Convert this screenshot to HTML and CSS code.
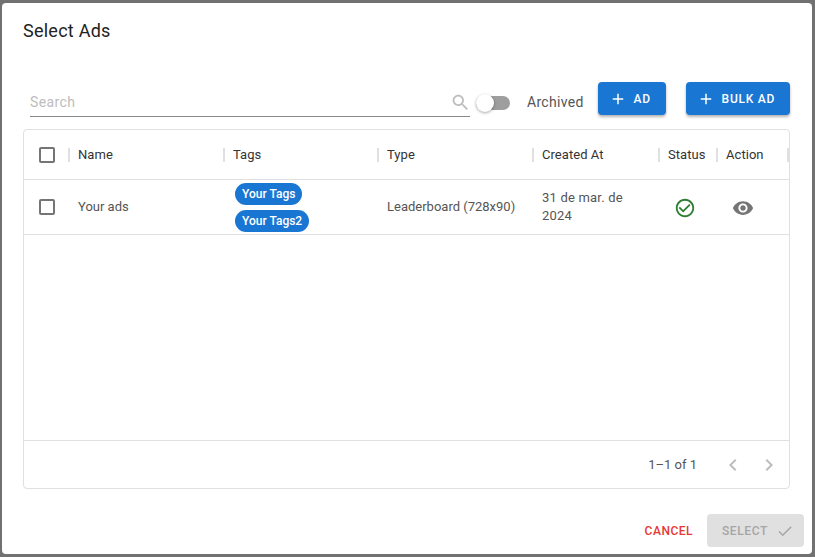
FILE: index.html
```html
<!DOCTYPE html>
<html>

<head>
  <title>Select Ads</title>
  <link rel="stylesheet" href="styles.css">
</head>

<body>
  <div class="dialog">
    <h2 class="dialog-title">Select Ads</h2>

    <div class="toolbar">
      <div class="search">
        <span class="search-text">Search</span>
        <svg class="search-icon" viewBox="0 0 24 24" width="21" height="21">
          <path fill="#bdbdbd" d="M15.5 14h-.79l-.28-.27C15.41 12.59 16 11.11 16 9.5 16 5.91 13.09 3 9.5 3S3 5.91 3 9.5 5.91 16 9.5 16c1.61 0 3.09-.59 4.23-1.57l.27.28v.79l5 4.99L20.49 19l-4.99-5zm-6 0C7.01 14 5 11.99 5 9.5S7.01 5 9.5 5 14 7.01 14 9.5 11.99 14 9.5 14z"/>
        </svg>
      </div>
      <div class="switch"><span class="switch-thumb"></span></div>
      <span class="switch-label">Archived</span>
      <button class="btn btn-ad" type="button">
        <svg viewBox="0 0 24 24" width="18" height="18"><path fill="#fff" d="M19 13h-6v6h-2v-6H5v-2h6V5h2v6h6v2z"/></svg>
        AD
      </button>
      <button class="btn btn-bulk" type="button">
        <svg viewBox="0 0 24 24" width="18" height="18"><path fill="#fff" d="M19 13h-6v6h-2v-6H5v-2h6V5h2v6h6v2z"/></svg>
        BULK AD
      </button>
    </div>

    <div class="table">
      <div class="table-row table-head">
        <div class="cell cell-check"><span class="checkbox"></span></div>
        <div class="cell"><span class="sep"></span>Name</div>
        <div class="cell"><span class="sep"></span>Tags</div>
        <div class="cell"><span class="sep"></span>Type</div>
        <div class="cell"><span class="sep"></span>Created At</div>
        <div class="cell"><span class="sep"></span>Status</div>
        <div class="cell"><span class="sep"></span>Action<span class="sep sep-end"></span></div>
      </div>

      <div class="table-row table-item">
        <div class="cell cell-check"><span class="checkbox"></span></div>
        <div class="cell cell-body">Your ads</div>
        <div class="cell cell-tags">
          <span class="tag">Your Tags</span>
          <span class="tag">Your Tags2</span>
        </div>
        <div class="cell cell-body">Leaderboard (728x90)</div>
        <div class="cell cell-body cell-date">31 de mar. de 2024</div>
        <div class="cell cell-icon cell-status">
          <svg viewBox="0 0 24 24" width="22" height="22">
            <path fill="#2e7d32" d="M16.59 7.58 10 14.17l-3.59-3.58L5 12l5 5 8-8zM12 2C6.48 2 2 6.48 2 12s4.48 10 10 10 10-4.48 10-10S17.52 2 12 2zm0 18c-4.42 0-8-3.58-8-8s3.58-8 8-8 8 3.58 8 8-3.58 8-8 8z"/>
          </svg>
        </div>
        <div class="cell cell-icon cell-action">
          <svg viewBox="0 0 24 24" width="22" height="22">
            <path fill="#757575" d="M12 4.5C7 4.5 2.73 7.61 1 12c1.73 4.39 6 7.5 11 7.5s9.27-3.11 11-7.5c-1.73-4.39-6-7.5-11-7.5zM12 17c-2.76 0-5-2.24-5-5s2.24-5 5-5 5 2.24 5 5-2.24 5-5 5zm0-8c-1.66 0-3 1.34-3 3s1.34 3 3 3 3-1.34 3-3-1.34-3-3-3z"/>
          </svg>
        </div>
      </div>

      <div class="table-space"></div>

      <div class="table-footer">
        <span class="page-count">1–1 of 1</span>
        <svg viewBox="0 0 24 24" width="24" height="24"><path fill="#bdbdbd" d="M15.41 7.41 14 6l-6 6 6 6 1.41-1.41L10.83 12z"/></svg>
        <svg viewBox="0 0 24 24" width="24" height="24"><path fill="#bdbdbd" d="M10 6 8.59 7.41 13.17 12l-4.58 4.59L10 18l6-6z"/></svg>
      </div>
    </div>

    <div class="actions">
      <button class="btn-cancel" type="button">CANCEL</button>
      <button class="btn-select" type="button" disabled>
        SELECT
        <svg viewBox="0 0 24 24" width="18" height="18"><path fill="#a6a6a6" d="M9 16.17 4.83 12l-1.42 1.41L9 19 21 7l-1.41-1.41z"/></svg>
      </button>
    </div>
  </div>
</body>

</html>
```

FILE: styles.css
```css
html,
body {
  height: 100%;
}

body {
  font-family: Roboto, Arial, sans-serif;
  margin: 0;
  padding: 3px 3px 3px 2px;
  box-sizing: border-box;
  background-color: #717171;
  overflow: hidden;
}

.dialog {
  display: flex;
  flex-direction: column;
  height: 100%;
  background: #fff;
  border-radius: 4px;
  color: rgba(0, 0, 0, 0.87);
}

.dialog-title {
  margin: 0;
  padding: 16px 21px 0;
  height: 79px;
  box-sizing: border-box;
  font-size: 18px;
  line-height: 23px;
  font-weight: 400;
  letter-spacing: 0.25px;
  color: #222;
}

.toolbar {
  display: flex;
  align-items: flex-start;
  height: 47px;
  padding-left: 28px;
}

.search {
  display: flex;
  align-items: center;
  justify-content: space-between;
  width: 440px;
  height: 35px;
  box-sizing: border-box;
  border-bottom: 1px solid #8a8a8a;
  padding-top: 5px;
}

.search-text {
  font-size: 14px;
  letter-spacing: 0.4px;
  color: #bdbdbd;
}

.search-icon {
  margin-top: 1px;
  margin-right: -1px;
}

.switch {
  display: flex;
  align-items: center;
  width: 34px;
  height: 14px;
  margin: 14px 0 0 6px;
  background-color: #9e9e9e;
  border-radius: 7px;
}

.switch-thumb {
  width: 18px;
  height: 18px;
  background: #fff;
  border-radius: 50%;
  box-shadow: 0 1px 3px rgba(0, 0, 0, 0.35);
}

.switch-label {
  margin: 12px 14px 0 17px;
  font-size: 14px;
  line-height: 16px;
  letter-spacing: 0.3px;
  color: #555;
}

.btn {
  display: flex;
  align-items: center;
  gap: 7px;
  height: 33px;
  padding: 0 12px 0 11px;
  background-color: #1976d2;
  color: #fff;
  font-family: inherit;
  font-size: 12px;
  font-weight: 500;
  letter-spacing: 0.75px;
  border: none;
  border-radius: 4px;
  box-shadow: 0 2px 3px rgba(0, 0, 0, 0.3);
}

.btn-ad {
  width: 68px;
  margin-right: 20px;
}

.btn-bulk {
  width: 104px;
}

.table {
  display: flex;
  flex-direction: column;
  height: 360px;
  box-sizing: border-box;
  margin: 0 22px 0 21px;
  border: 1px solid #e0e0e0;
  border-radius: 4px;
}

.table-row {
  display: grid;
  grid-template-columns: 44px 155px 154px 155px 126px 58px 73px;
  border-bottom: 1px solid #e0e0e0;
}

.table-head {
  height: 50px;
  box-sizing: border-box;
  font-size: 13px;
  font-weight: 400;
  letter-spacing: 0.05px;
  color: #333;
}

.table-item {
  height: 55px;
  box-sizing: border-box;
  font-size: 13px;
  color: #555;
}

.cell {
  display: flex;
  align-items: center;
}

.cell-check {
  padding-left: 15px;
}

.checkbox {
  width: 12px;
  height: 12px;
  border: 2px solid #757575;
  border-radius: 2px;
}

.sep {
  width: 2px;
  height: 14px;
  margin-right: 8px;
  background-color: #e0e0e0;
}

.sep-end {
  margin: 0 0 0 auto;
}

.cell-body {
  padding-left: 10px;
  line-height: 18px;
}

.cell-date {
  padding-right: 20px;
  letter-spacing: 0.2px;
}

.cell-tags {
  flex-direction: column;
  align-items: flex-start;
  justify-content: center;
  gap: 5px;
  padding-left: 12px;
}

.tag {
  height: 22px;
  padding: 0 7px;
  background-color: #1976d2;
  color: #fff;
  font-size: 12px;
  font-weight: 500;
  line-height: 22px;
  border-radius: 11px;
}

.cell-icon {
  justify-content: center;
  padding-top: 2px;
}

.cell-status {
  padding-right: 4px;
}

.cell-action {
  padding-right: 20px;
}

.table-space {
  flex: 1;
}

.table-footer {
  display: flex;
  align-items: center;
  justify-content: flex-end;
  gap: 12px;
  height: 48px;
  box-sizing: border-box;
  padding-right: 8px;
  border-top: 1px solid #e0e0e0;
}

.page-count {
  margin-right: 12px;
  font-size: 13px;
  color: #555;
}

.actions {
  display: flex;
  align-items: center;
  justify-content: flex-end;
  gap: 14px;
  padding: 25px 8px 7px 0;
}

.btn-cancel {
  padding: 0;
  background: none;
  border: none;
  color: #e53935;
  font-family: inherit;
  font-size: 12px;
  font-weight: 500;
  letter-spacing: 0.5px;
}

.btn-select {
  display: flex;
  align-items: center;
  gap: 8px;
  width: 97px;
  height: 33px;
  padding: 0 0 0 15px;
  background-color: #e0e0e0;
  color: #a6a6a6;
  font-family: inherit;
  font-size: 12px;
  font-weight: 500;
  letter-spacing: 0.6px;
  border: none;
  border-radius: 4px;
}
```
